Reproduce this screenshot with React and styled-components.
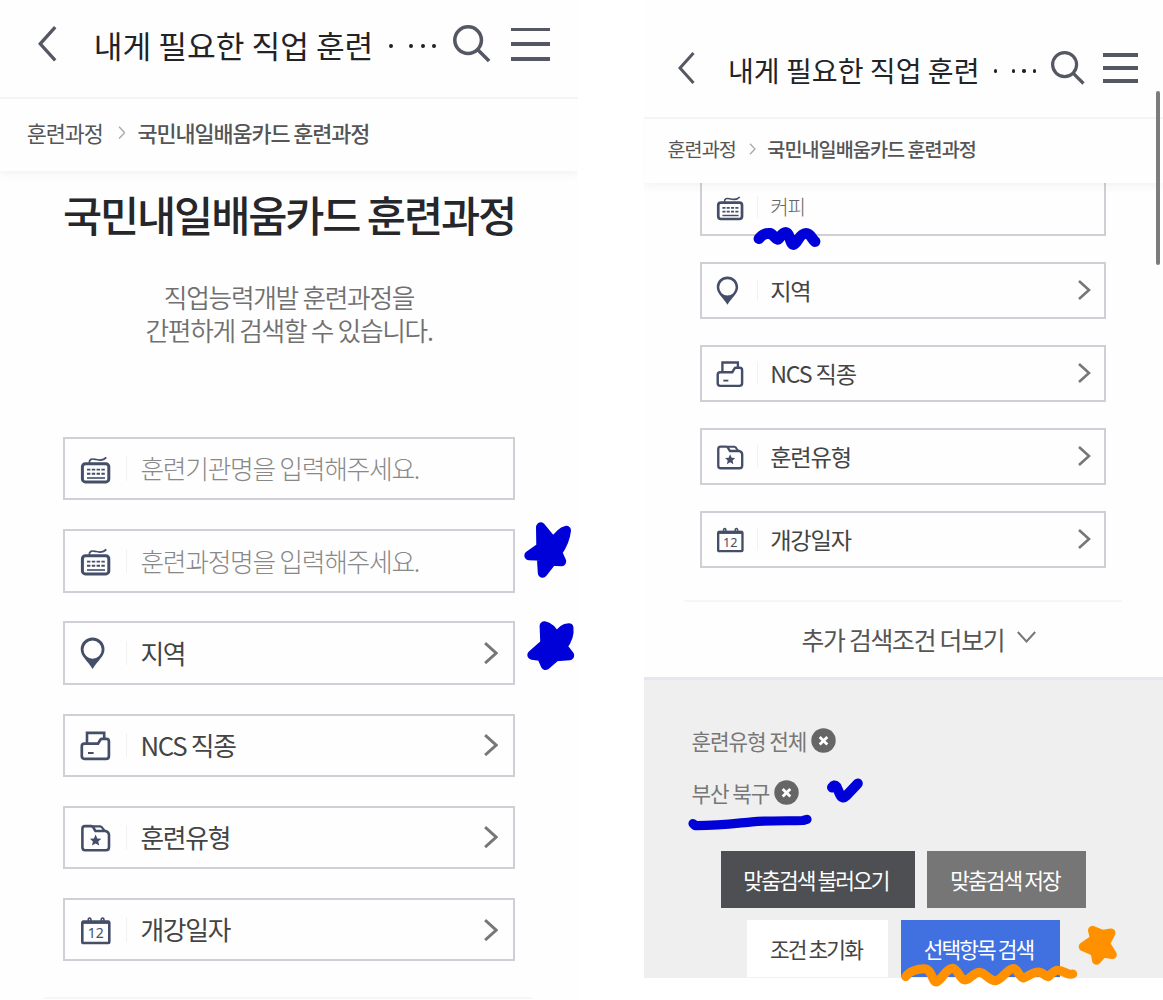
import React from 'react';
import styled, { createGlobalStyle, ThemeProvider, css } from 'styled-components';

// every size below is for the small phone, the big one is scaled up
const px = (n) => ({ theme }) => `${+(n * theme.k).toFixed(2)}px`;

const FIELDS = [
  { icon: 'pin', label: '지역' },
  { icon: 'box', label: 'NCS 직종' },
  { icon: 'folder', label: '훈련유형' },
  { icon: 'calendar', label: '개강일자' },
];

function FieldIcon({ name }) {
  return (
    <IconSvg viewBox="0 0 30 32">
      {name === 'keyboard' && (
        <>
          <path d="M8.3 10C8 6 11 5.6 14 6.3C18.5 7.6 22.5 7.6 25.3 4.4" strokeWidth="1.7" />
          <rect x="1.4" y="10.7" width="26.4" height="18.2" rx="3" strokeWidth="3" />
          <path d="M6 16.6H24M6 20.7H24" strokeWidth="1.9" strokeDasharray="3.4 1.4" />
          <path d="M6 25H24" strokeWidth="1.6" />
        </>
      )}
      {name === 'pin' && (
        <path
          d="M11.6 .5C5 .5 -.3 5.6 -.3 12.3C-.3 19.5 6.5 23.5 11.6 32C16.7 23.5 23.5 19.5 23.5 12.3C23.5 5.6 18.2 .5 11.6 .5ZM11.6 3.5A9.1 9.1 0 1 1 11.6 21.7A9.1 9.1 0 1 1 11.6 3.5Z"
          fill="#444e69"
          fillRule="evenodd"
          stroke="none"
        />
      )}
      {name === 'box' && (
        <>
          <path d="M6 14V3.9H23.2V9" strokeWidth="2.6" />
          <path d="M3.5 14.7H17L19.5 10.5Q20 9.8 21 9.8H25.3Q27.9 9.8 27.9 12.5V27Q27.9 29.9 25 29.9H3.5Q.8 29.9 .8 27V17.5Q.8 14.7 3.5 14.7Z" strokeWidth="2.7" />
          <path d="M7 24H12.6" strokeWidth="2" />
        </>
      )}
      {name === 'folder' && (
        <>
          <path d="M4 5.1H10.3Q11.4 5.1 12.1 6.2L14.4 10H24.5Q28 11 28 14V26Q28 29.2 25 29.2H4.2Q1.4 29.2 1.4 26.3V7.8Q1.4 5.1 4 5.1Z" strokeWidth="2.6" />
          <path d="M11.5 5.3H19.5Q21 5.6 22.5 8.5L24 10.3" strokeWidth="2.2" />
          <path d="M14.6 13.6L16.3 17.4L20.3 17.8L17.3 20.5L18.2 24.6L14.6 22.5L11 24.6L11.9 20.5L8.9 17.8L12.9 17.4Z" fill="#444e69" stroke="none" />
        </>
      )}
      {name === 'calendar' && (
        <>
          <rect x="1.3" y="7.8" width="27" height="21.2" rx="1" strokeWidth="2.6" />
          <path d="M1.3 8.2H28.3" strokeWidth="3.4" />
          <path d="M7.3 8V5Q8.6 2.9 9.9 5V8M20.3 8V5Q21.6 2.9 22.9 5V8" strokeWidth="1.6" />
          <IconText x="14.8" y="24">12</IconText>
        </>
      )}
    </IconSvg>
  );
}

function TopBar() {
  return (
    <Header>
      <BackIcon viewBox="0 0 17 32"><path d="M15.5 1L2 16L15.5 31" /></BackIcon>
      <HeaderTitle>
        내게 필요한 직업 훈련 <Dots><i /><i /><i /><i /></Dots>
      </HeaderTitle>
      <SearchIcon viewBox="0 0 34 34">
        <circle cx="13.6" cy="13.6" r="12" />
        <path d="M22.3 22.3L32.5 32.5" />
      </SearchIcon>
      <MenuIcon><span /><span /><span /></MenuIcon>
    </Header>
  );
}

function Breadcrumb() {
  return (
    <Crumbs>
      <span>훈련과정</span>
      <CrumbArrow viewBox="0 0 7 12"><path d="M1 .7L6 6L1 11.3" /></CrumbArrow>
      <strong>국민내일배움카드 훈련과정</strong>
    </Crumbs>
  );
}

function Field({ icon, label, input, filled }) {
  return (
    <FieldBox>
      <FieldIcon name={icon} />
      <FieldLabel $input={input} $filled={filled}>{label}</FieldLabel>
      {!input && (
        <FieldArrow viewBox="0 0 13 20"><path d="M1 1L11 10L1 19" /></FieldArrow>
      )}
    </FieldBox>
  );
}

function Chip({ children }) {
  return (
    <ChipRow>
      {children}
      <ChipClose viewBox="0 0 25 25">
        <circle cx="12.5" cy="12.5" r="12.2" fill="#666" />
        <path d="M8.7 8.9L16.3 16.5M16.3 8.9L8.7 16.5" stroke="#fff" strokeWidth="2.8" />
      </ChipClose>
    </ChipRow>
  );
}

// pen marks drawn over both screens
function PenMarks() {
  return (
    <Marks viewBox="0 0 1163 1000">
      <g stroke="#0000d8" fill="#0000d8">
        <path strokeWidth="9.4" d="M540.7 527L541 547L529 555.5L541.5 556L542.5 573L552 561L561.5 561.5L557.5 552.5Q565 542 566.3 530.5Q560 532 553.5 542.5Z" />
        <path strokeWidth="9.4" d="M544.3 626L545 643.5L532 655L541.5 656.3L545.5 665.3L556 656.5L569.5 655.5L562.5 646.5Q570 637 568.8 628Q562 628 556.5 638Q551 627 544.3 626Z" />
      </g>
      <g stroke="#0000d8" fill="none">
        <path strokeWidth="10.8" d="M759 238.7Q763 233 770 233.4C773 234 775 239 777.5 239.3C780 239.5 781 232.5 786 232.5C790 233 790 244.5 793.5 244.5C797 244.5 799 233.5 806 233.4C811 233.5 811.5 239 815 241.5" />
        <path strokeWidth="9.2" d="M693 823.5L695 825.6C720 825.8 738 823 752 821.8C770 820.3 790 821 803 820.5L807 819.3" />
        <path strokeWidth="10" d="M832 787.5Q834.5 784 836.5 786.5L840 794.5Q842.5 799.5 846 796L857.8 783.5" />
      </g>
      <g stroke="#ff9100" fill="none">
        <path strokeWidth="9" d="M905.7 976.7C909 971 918 968.8 924 968.7C932 968.5 932 982 936.3 982C941 981 946 968.5 952.7 968.2C958 969 960 980 965 980C970 979.5 974 972.3 979.5 972.2C985 972.5 989 980.7 995.5 980.7C1002 980 1007 968.7 1013.5 968.5C1018 969 1019 977 1023.3 978C1028 977 1032 972 1038.5 972C1043 972 1045 976.5 1048.3 976.7C1051 975 1053 970 1058 970.2C1064 970.5 1067 975.5 1072.7 974" />
        <path fill="#ff9100" strokeWidth="9" d="M1092.5 930.3L1094.5 939L1083.2 946.7L1095 952L1096.5 960.3L1103 953L1112.3 954.5L1105.5 943.5L1111 933L1102.5 934.5Z" />
      </g>
    </Marks>
  );
}

export default function App() {
  return (
    <>
      <GlobalStyle />
      <Page>
        <ThemeProvider theme={{ k: 1.111, head: 97, crumb: 73, lift: 3 }}>
          <Phone>
            <TopBar />
            <Breadcrumb />
            <Intro>
              <h1>국민내일배움카드 훈련과정</h1>
              <p>직업능력개발 훈련과정을<br />간편하게 검색할 수 있습니다.</p>
            </Intro>
            <FieldList>
              <Field icon="keyboard" label="훈련기관명을 입력해주세요." input />
              <Field icon="keyboard" label="훈련과정명을 입력해주세요." input />
              {FIELDS.map((f) => <Field key={f.label} {...f} />)}
            </FieldList>
            <Divider />
          </Phone>
        </ThemeProvider>

        <ThemeProvider theme={{ k: 1, head: 90, crumb: 65, lift: 0 }}>
          <Phone $second>
            <TopBar />
            <Breadcrumb />
            <Scrolled>
              <FieldList>
                <Field icon="keyboard" label="커피" input filled />
                {FIELDS.map((f) => <Field key={f.label} {...f} />)}
              </FieldList>
              <Divider />
              <More>
                추가 검색조건 더보기
                <svg viewBox="0 0 19 12"><path d="M.8 1L9.5 10.5L18.2 1" /></svg>
              </More>
            </Scrolled>
            <Panel>
              <Chip>훈련유형 전체</Chip>
              <Chip>부산 북구</Chip>
              <Actions>
                <Action $bg="#4e4f52" $w={194}>맞춤검색 불러오기</Action>
                <Action $bg="#767676" $w={159}>맞춤검색 저장</Action>
              </Actions>
              <Actions>
                <Action $bg="#fff" $color="#444" $w={141}>조건 초기화</Action>
                <Action $bg="#4171e0" $w={159}>선택항목 검색</Action>
              </Actions>
            </Panel>
            <ScrollThumb />
          </Phone>
        </ThemeProvider>
        <PenMarks />
      </Page>
    </>
  );
}

const GlobalStyle = createGlobalStyle`
  *{
    box-sizing: border-box;
  }
  body{
    margin: 0;
    background: #fff;
    font-family: "Noto Sans CJK KR", "Noto Sans", sans-serif;
  }
  h1, p{
    margin: 0;
  }
`;

const Page = styled.div`
  position: relative;
  display: flex;
  justify-content: space-between;
  width: 1163px;
  height: 1000px;
  overflow: hidden;
`;

const Phone = styled.section`
  position: relative;
  width: 578px;
  background: #fefefe;
  ${({ $second }) => $second && css`
    width: 519.5px;
    height: 978px;
    padding-top: 27px;
  `}
`;

const Header = styled.header`
  display: flex;
  align-items: center;
  height: ${({ theme }) => theme.head}px;
  padding: 0 ${px(25.5)} ${px(4)} ${px(34)};
`;

const strokeIcon = css`
  flex: none;
  fill: none;
  stroke: #555762;
`;

const BackIcon = styled.svg`
  ${strokeIcon}
  width: ${px(17)};
  height: ${px(32)};
  margin-bottom: ${px(4)};
  stroke-width: 3;
`;

const HeaderTitle = styled.div`
  display: flex;
  align-items: center;
  flex: 1;
  margin: 0 0 ${({ theme }) => theme.lift}px ${px(33.5)};
  font-size: ${px(28.1)};
  line-height: ${px(40)};
  color: #222327;
  white-space: nowrap;
`;

const Dots = styled.span`
  display: flex;
  gap: ${px(7)};
  margin: ${px(2)} 0 0 ${px(14)};
  i{
    width: ${px(3.4)};
    height: ${px(3.4)};
    border-radius: 50%;
    background: #222327;
  }
  i:first-child{
    margin-right: ${px(8)};
  }
`;

const SearchIcon = styled.svg`
  ${strokeIcon}
  width: ${px(34)};
  height: ${px(34)};
  margin-bottom: ${px(4)};
  stroke-width: 3.2;
`;

const MenuIcon = styled.div`
  display: flex;
  flex-direction: column;
  gap: ${px(9.8)};
  width: ${px(34.5)};
  margin: 0 0 ${px(4)} ${px(18.5)};
  span{
    height: ${px(3.4)};
    background: #555762;
  }
`;

const Crumbs = styled.nav`
  position: relative;
  display: flex;
  align-items: center;
  height: ${({ theme }) => theme.crumb + 1}px;
  padding: 0 0 5px ${px(24)};
  border-top: 2px solid #f4f4f5;
  background: #fefefe;
  box-shadow: 0 3px 9px rgba(0, 0, 0, .05);
  clip-path: inset(0 0 -14px 0);
  z-index: 1;
  font-size: ${px(19.65)};
  letter-spacing: -.05em;
  color: #555;
  white-space: nowrap;
  strong{
    font-weight: 500;
  }
`;

const CrumbArrow = styled.svg`
  width: ${px(7)};
  height: ${px(12)};
  margin: 0 ${px(11)} 0 ${px(13.5)};
  fill: none;
  stroke: #aaa;
  stroke-width: 1.3;
`;

const Intro = styled.div`
  text-align: center;
  padding-top: 14px;
  h1{
    font-size: 42.6px;
    font-weight: 500;
    line-height: 58px;
    letter-spacing: -.05em;
    color: #26272b;
  }
  p{
    margin: 37px 0 91px;
    font-size: 25.7px;
    font-weight: 350;
    line-height: 33px;
    letter-spacing: -.05em;
    color: #707070;
  }
`;

const Scrolled = styled.div`
  margin-top: -4.5px;
`;

const FieldList = styled.div`
  display: flex;
  flex-direction: column;
  gap: ${px(26)};
  padding: 0 ${px(57)} 0 ${px(56.5)};
`;

const FieldBox = styled.div`
  display: flex;
  align-items: center;
  height: ${px(57)};
  padding: 0 ${px(13)} 0 ${px(15)};
  border: 2px solid #cfcfd5;
`;

const IconSvg = styled.svg`
  flex: none;
  width: ${px(27)};
  height: ${px(28.8)};
  overflow: visible;
  fill: none;
  stroke: #444e69;
`;

const IconText = styled.text`
  font: 400 14px "Noto Sans", sans-serif;
  text-anchor: middle;
  fill: #444e69;
  stroke: none;
`;

const FieldLabel = styled.div`
  flex: 1;
  margin-left: ${px(12.7)};
  padding-left: ${px(12.5)};
  border-left: 1px solid #f1f1f3;
  font-size: ${px(23.2)};
  line-height: ${px(22)};
  letter-spacing: -.05em;
  color: #444;
  white-space: nowrap;
  ${({ $input }) => $input && css`
    font-weight: 300;
    color: #888;
  `}
  ${({ $filled }) => $filled && css`
    font-size: 20px;
    color: #666;
  `}
`;

const FieldArrow = styled.svg`
  width: ${px(13)};
  height: ${px(20)};
  fill: none;
  stroke: #777;
  stroke-width: 2.6;
`;

const Divider = styled.hr`
  height: 2px;
  margin: ${px(32)} ${px(41)} 0 ${px(40)};
  border: 0;
  background: #f6f6f6;
`;

const More = styled.div`
  display: flex;
  align-items: center;
  height: 75px;
  padding: 0 0 1px 158px;
  font-size: 24.8px;
  letter-spacing: -.05em;
  color: #555;
  svg{
    width: 19px;
    height: 12px;
    margin: 0 0 3px 13px;
    fill: none;
    stroke: #777;
    stroke-width: 2;
  }
`;

const Panel = styled.div`
  height: 301.5px;
  padding-top: 35px;
  border-top: 3px solid #e6e6f3;
  background: #efefef;
`;

const ChipRow = styled.div`
  display: flex;
  align-items: center;
  height: 52px;
  padding-left: 48px;
  font-size: 21.3px;
  letter-spacing: -.05em;
  color: #777;
`;

const ChipClose = styled.svg`
  width: 25px;
  height: 25px;
  margin-left: 5px;
`;

const Actions = styled.div`
  display: flex;
  justify-content: center;
  gap: 12.5px;
  margin-top: 32px;
  & + &{
    margin-top: 12.5px;
  }
`;

const Action = styled.button`
  width: ${({ $w }) => $w}px;
  height: 57px;
  padding: 0 3px 0 0;
  border: 0;
  background: ${({ $bg }) => $bg};
  color: ${({ $color }) => $color || '#fff'};
  font-family: inherit;
  font-size: 21.4px;
  letter-spacing: -.088em;
`;

const ScrollThumb = styled.div`
  position: absolute;
  top: 91px;
  right: 3px;
  z-index: 2;
  width: 4px;
  height: 174px;
  border-radius: 2px;
  background: #7c7c7c;
`;

const Marks = styled.svg`
  position: absolute;
  inset: 0;
  z-index: 3;
  width: 1163px;
  height: 1000px;
  pointer-events: none;
  stroke-linecap: round;
  stroke-linejoin: round;
`;
